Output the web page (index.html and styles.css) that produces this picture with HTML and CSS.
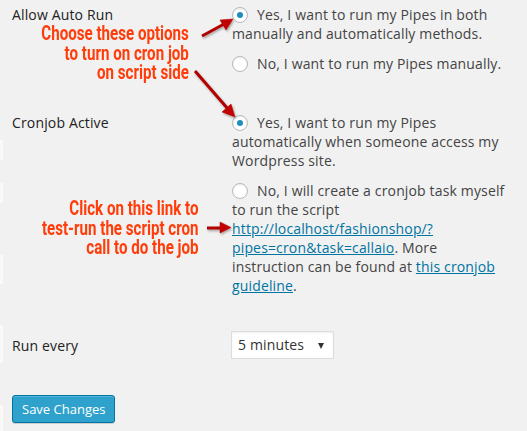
FILE: index.html
```html
<!DOCTYPE html>
<html>
<head>
<meta charset="utf-8">
<link rel="stylesheet" href="styles.css">
</head>
<body>
<div class="page">
  <div class="edge edge-1"></div>
  <div class="edge edge-2"></div>
  <div class="edge edge-3"></div>
  <div class="edge edge-4"></div>
  <div class="edge edge-5"></div>

  <form class="form">
    <div class="row row-auto">
      <div class="label">Allow Auto Run</div>
      <div class="field">
        <label class="opt"><input class="radio" type="radio" name="auto" checked>Yes, I want to run my Pipes in both manually and automatically methods.</label>
        <label class="opt"><input class="radio" type="radio" name="auto">No, I want to run my Pipes manually.</label>
      </div>
    </div>

    <div class="row row-cron">
      <div class="label">Cronjob Active</div>
      <div class="field">
        <label class="opt"><input class="radio" type="radio" name="cron" checked>Yes, I want to run my Pipes automatically when someone access my Wordpress site.</label>
        <label class="opt"><input class="radio" type="radio" name="cron">No, I will create a cronjob task myself to run the script <a href="#">http://localhost/fashionshop/?pipes=cron&amp;task=callaio</a>. More instruction can be found at <a href="#">this cronjob guideline</a>.</label>
      </div>
    </div>

    <div class="row row-every">
      <div class="label">Run every</div>
      <div class="field">
        <div class="select-wrap">
          <select class="select">
            <option>5 minutes</option>
          </select>
        </div>
      </div>
    </div>

    <div class="submit">
      <button type="button" class="button">Save Changes</button>
    </div>
  </form>

  <div class="note note-top">Choose these options<br>to turn on cron job<br>on script side</div>
  <div class="note note-link">Click on this link to<br>test-run the script cron<br>call to do the job</div>

  <svg class="arrows" width="527" height="431" viewBox="0 0 527 431">
    <defs>
      <filter id="sh" x="-20%" y="-20%" width="140%" height="140%">
        <feDropShadow dx="1" dy="1.5" stdDeviation="0.8" flood-color="#000" flood-opacity="0.35"/>
      </filter>
    </defs>
    <g fill="#c10000" stroke="#b00000" filter="url(#sh)">
      <line x1="202" y1="36" x2="224" y2="24" stroke-width="3"/>
      <polygon points="233,19 220,20 226,30" stroke-width="0.5"/>
      <line x1="195" y1="71" x2="228" y2="109" stroke-width="3"/>
      <polygon points="235,117 222,112 231,104" stroke-width="0.5"/>
      <line x1="207" y1="228" x2="222" y2="228" stroke-width="3"/>
      <polygon points="231,227.5 220,222 220,233" stroke-width="0.5"/>
    </g>
  </svg>
</div>
</body>
</html>
```

FILE: styles.css
```css
html, body {
  margin: 0;
  padding: 0;
  background: #f1f1f1;
}

body {
  font-family: "Open Sans", "Liberation Sans", sans-serif;
  font-size: 14px;
  color: #444;
}

.page {
  position: relative;
  width: 527px;
  height: 431px;
  overflow: hidden;
}

.form {
  margin: 0;
  padding: 5px 20px 0 12px;
  letter-spacing: 0.15px;
}

.row {
  display: grid;
  grid-template-columns: 220px 1fr;
}

.row-cron {
  margin-top: 40px;
}

.row-every {
  margin-top: 36px;
  align-items: center;
}

.label {
  color: #222;
  line-height: 19px;
}

.field {
  line-height: 19px;
}

.opt {
  display: block;
  margin-bottom: 11px;
}

.opt:last-child {
  margin-bottom: 0;
}

.radio {
  -webkit-appearance: none;
  appearance: none;
  box-sizing: border-box;
  width: 16px;
  height: 16px;
  margin: 0 9px 0 0;
  padding: 0;
  border: 1px solid #b4b9be;
  border-radius: 50%;
  background: #fff;
  box-shadow: inset 0 1px 2px rgba(0, 0, 0, 0.07);
  vertical-align: -3px;
  position: relative;
}

.radio:checked::before {
  content: "";
  position: absolute;
  left: 4px;
  top: 4px;
  width: 6px;
  height: 6px;
  border-radius: 50%;
  background: #1e8cbe;
}

a {
  color: #0074a2;
  text-decoration: underline;
}

.select-wrap {
  position: relative;
  width: 103px;
  height: 28px;
  margin-left: -1px;
}

.select {
  -webkit-appearance: none;
  appearance: none;
  box-sizing: border-box;
  width: 103px;
  height: 28px;
  margin: 0;
  padding: 0 0 0 6px;
  border: 1px solid #ddd;
  border-radius: 0;
  background: #fff;
  box-shadow: inset 0 1px 2px rgba(0, 0, 0, 0.07);
  font-family: "Open Sans", "Liberation Sans", sans-serif;
  font-size: 14px;
  letter-spacing: 0.15px;
  color: #333;
  line-height: 26px;
}

.select-wrap::after {
  content: "";
  position: absolute;
  right: 10px;
  top: 12px;
  width: 0;
  height: 0;
  border-left: 3.5px solid transparent;
  border-right: 3.5px solid transparent;
  border-top: 6px solid #333;
  pointer-events: none;
}

.submit {
  margin-top: 36px;
}

.button {
  box-sizing: border-box;
  height: 28px;
  padding: 0 9px 1px;
  border: 1px solid #0074a2;
  border-radius: 3px;
  background: #2ea2cc;
  box-shadow: inset 0 1px 0 rgba(120, 200, 230, 0.5), 0 1px 0 rgba(0, 0, 0, 0.15);
  color: #fff;
  font-family: "Open Sans", "Liberation Sans", sans-serif;
  font-size: 13px;
  line-height: 26px;
  white-space: nowrap;
  cursor: pointer;
}

.note {
  position: absolute;
  font-family: Roboto, "Liberation Sans", sans-serif;
  font-weight: 700;
  font-size: 21px;
  line-height: 19.5px;
  color: #ff3c0a;
  text-align: right;
  white-space: nowrap;
  transform: scaleX(0.72);
  transform-origin: right top;
}

.note-top {
  right: 338px;
  top: 24px;
}

.note-link {
  right: 328px;
  top: 199px;
}

.arrows {
  position: absolute;
  left: 0;
  top: 0;
  pointer-events: none;
}

.edge {
  position: absolute;
  left: 0;
  width: 3px;
  background: #f9f9f9;
}

.edge-1 { top: 140px; height: 20px; }
.edge-2 { top: 183px; height: 20px; }
.edge-3 { top: 255px; height: 29px; }
.edge-4 { top: 325px; height: 38px; }
.edge-5 { top: 405px; height: 26px; }
```
